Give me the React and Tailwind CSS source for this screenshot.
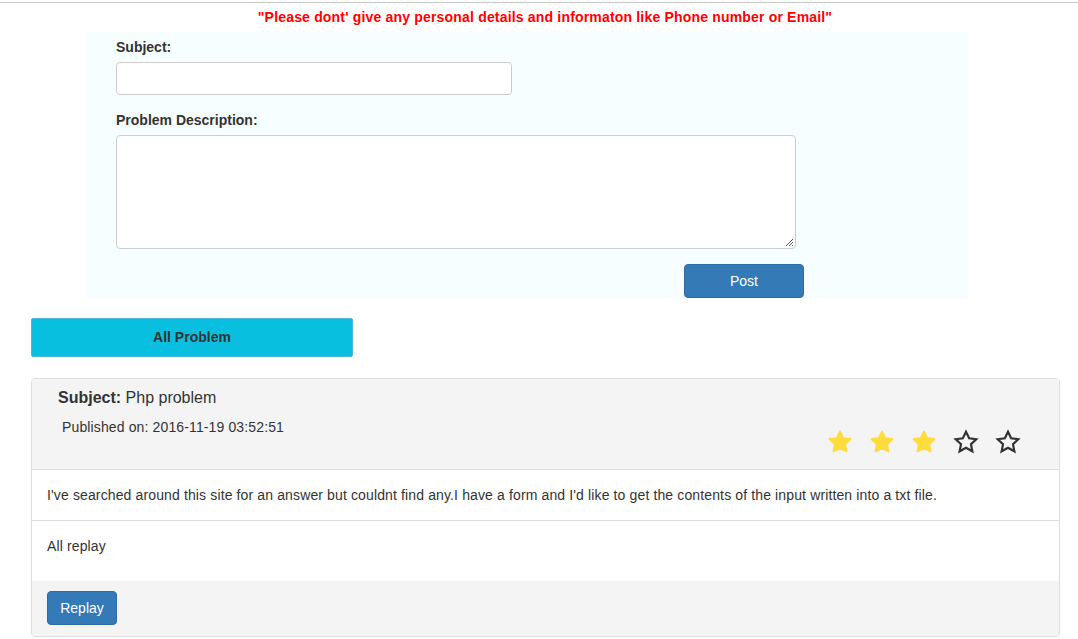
import React from "react";

const STAR = "M12 2.5l2.9 6.1 6.6.8-4.9 4.6 1.3 6.6L12 17.3l-5.9 3.3 1.3-6.6-4.9-4.6 6.6-.8z";

function Star({ filled }) {
  return (
    <svg width="26" height="26" viewBox="0 0 24 24" className="block">
      {filled ? (
        <path d={STAR} fill="#fddc3c" stroke="#fddc3c" strokeWidth="2" strokeLinejoin="round" />
      ) : (
        <path d={STAR} fill="none" stroke="#333" strokeWidth="2" strokeLinejoin="miter" />
      )}
    </svg>
  );
}

export default function App() {
  return (
    <div className="min-h-[639px] bg-white text-[#333] pt-[2px]" style={{ fontFamily: '"Liberation Sans", Arial, sans-serif' }}>
      <div className="border-t border-[#c8c8c8]">
        <div className="h-[29px] flex items-center justify-center pl-[12px] text-[14px] font-bold text-[#ff0000] tracking-[0.18px]">
          "Please dont' give any personal details and informaton like Phone number or Email"
        </div>
        <div className="ml-[86px] w-[882px] bg-[#f7feff] pt-[6px] pl-[30px]">
          <div className="text-[14px] font-bold leading-[18px]">Subject:</div>
          <div className="mt-[6px] w-[396px] h-[33px] bg-white border border-[#cccccc] rounded-[4px]"></div>
          <div className="mt-[16px] text-[14px] font-bold leading-[18px]">Problem Description:</div>
          <div className="mt-[6px] w-[680px] h-[114px] bg-white border border-[#cccccc] rounded-[4px] relative">
            <svg className="absolute right-[1px] bottom-[1px]" width="9" height="9" viewBox="0 0 9 9">
              <path d="M8 1L1 8M8 4L4 8M8 7L7 8" stroke="#555" strokeWidth="1" />
            </svg>
          </div>
          <div className="mt-[15px] ml-[568px] w-[120px] h-[34px] bg-[#337ab7] border border-[#2e6da4] rounded-[4px] flex items-center justify-center text-white text-[14px]">
            Post
          </div>
        </div>
        <div className="ml-[31px] mt-[20px] w-[322px] h-[39px] bg-[#08bfdf] border border-[#46b8da] rounded-[2px] flex items-center justify-center text-[14px] font-bold text-[#333]">
          All Problem
        </div>
        <div className="ml-[31px] mt-[21px] w-[1029px] border border-[#dddddd] rounded-[4px] overflow-hidden">
          <div className="bg-[#f4f4f4] h-[91px] border-b border-[#dddddd] flex justify-between">
            <div className="pl-[26px] pt-[9px]">
              <div className="text-[16px] leading-[20px]">
                <span className="font-bold">Subject:</span> Php problem
              </div>
              <div className="pl-[4px] mt-[9px] text-[14px] leading-[20px] tracking-[0.13px]">Published on: 2016-11-19 03:52:51</div>
            </div>
            <div className="flex items-start gap-[16px] pt-[50px] pr-[38px]">
              <Star filled />
              <Star filled />
              <Star filled />
              <Star />
              <Star />
            </div>
          </div>
          <div className="px-[15px] pt-[15px] pb-[15px] text-[14px] leading-[20px] border-b border-[#dddddd] tracking-[0.13px]">
            I've searched around this site for an answer but couldnt find any.I have a form and I'd like to get the contents of the input written into a txt file.
          </div>
          <div className="px-[15px] pt-[15px] pb-[25px] text-[14px] leading-[20px] tracking-[0.13px]">All replay</div>
          <div className="bg-[#f4f4f4] h-[55px] px-[15px] pt-[10px]">
            <div className="w-[70px] h-[34px] bg-[#337ab7] border border-[#2e6da4] rounded-[4px] flex items-center justify-center text-white text-[14px]">
              Replay
            </div>
          </div>
        </div>
      </div>
    </div>
  );
}
